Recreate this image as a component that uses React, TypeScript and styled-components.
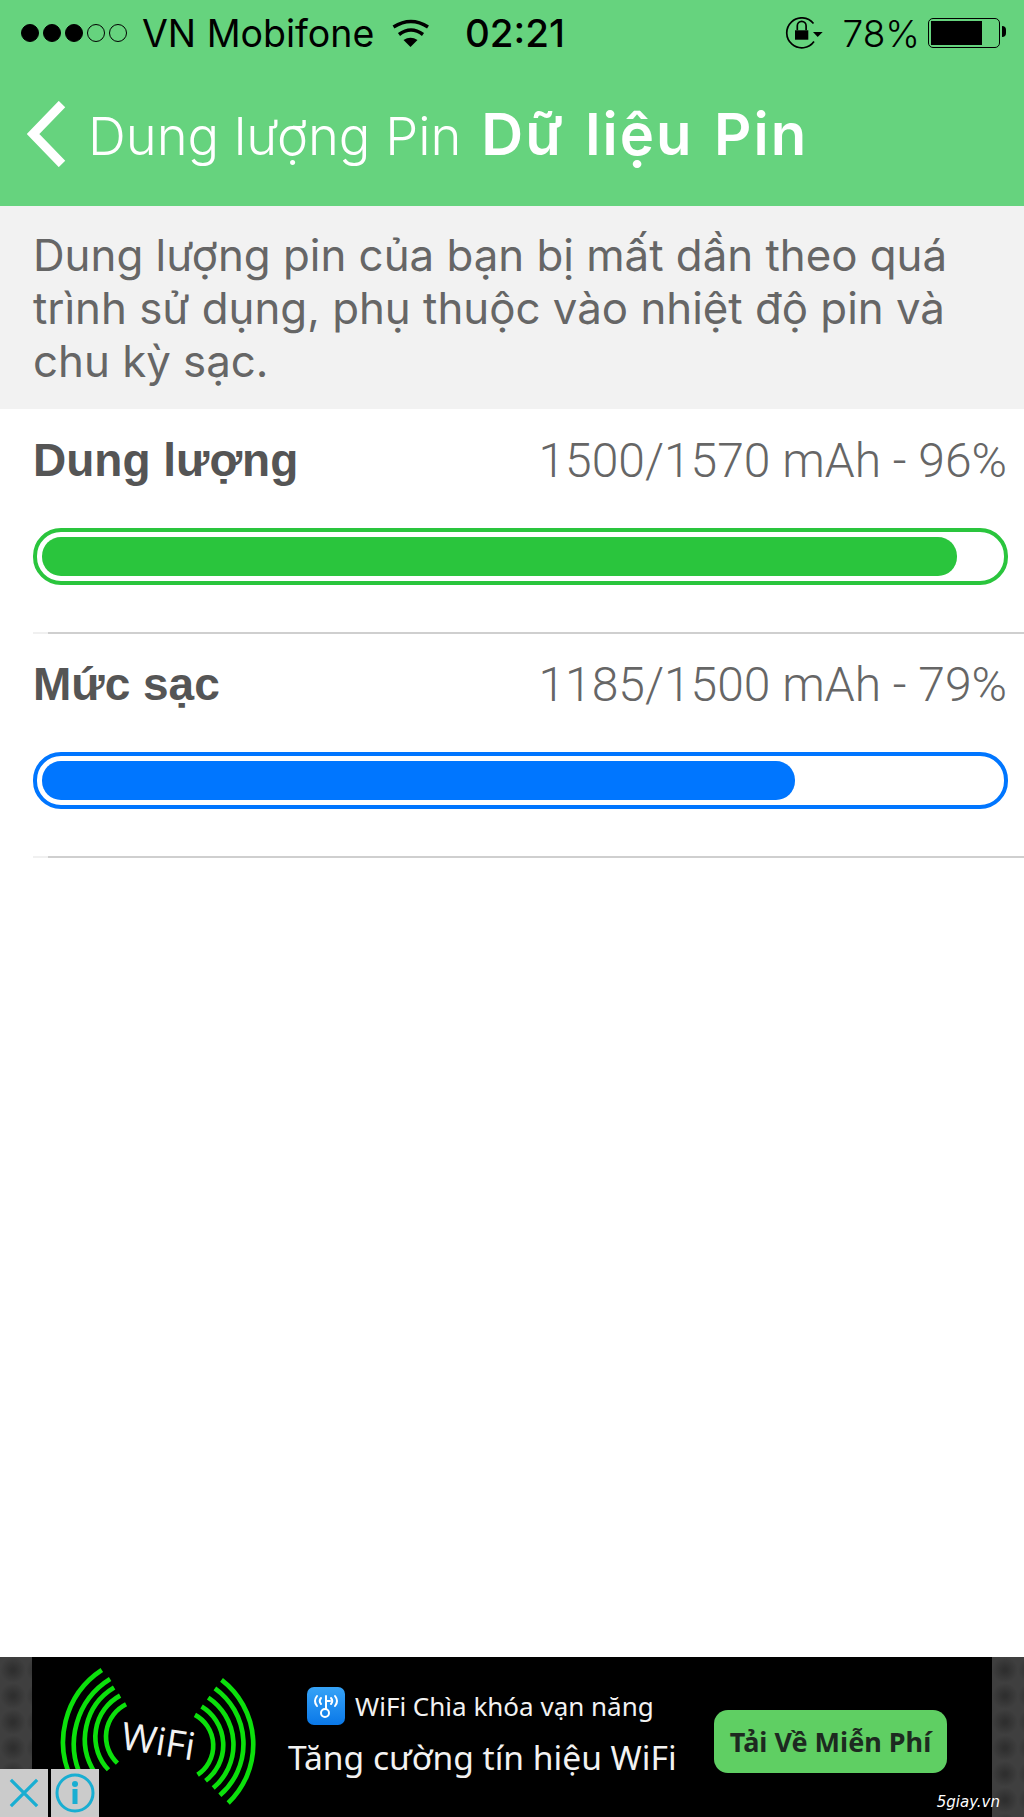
import React from "react";
import styled, { createGlobalStyle } from "styled-components";

const meters = [
  { label: "Dung lượng", value: "1500/1570 mAh - 96%", percent: 96, color: "#2ac53d" },
  { label: "Mức sạc", value: "1185/1500 mAh - 79%", percent: 79, color: "#0076ff" },
];

export default function App() {
  return (
    <Page>
      <GlobalStyle />
      <Header>
        <StatusBar>
          <Signal>
            {[true, true, true, false, false].map((on, i) => (
              <SignalDot key={i} $on={on} />
            ))}
          </Signal>
          <Carrier>VN Mobifone</Carrier>
          <WifiIcon viewBox="0 0 38 28">
            <path d="M1.5 8 Q19 -3 36 8" />
            <path d="M7 15.5 Q19 6.5 31 15.5" />
            <path d="M18.5 28 L11.5 21 Q18.5 16.5 25.5 21 Z" fill="#000" stroke="none" />
          </WifiIcon>
          <Clock>02:21</Clock>
          <StatusRight>
            <LockIcon viewBox="0 0 38 32">
              <path d="M28.5 6.5 A15 15 0 1 0 29 24.5" />
              <rect x="10" y="13.3" width="13.3" height="9.4" fill="#000" stroke="none" />
              <path d="M12.3 13.3 V8.8 a4.4 4.4 0 0 1 8.8 0 V13.3" />
              <path d="M28 15 H37.7 L32.7 20 Z" fill="#000" stroke="none" />
            </LockIcon>
            <Percent>78%</Percent>
            <Battery>
              <BatteryLevel $percent={78} />
              <BatteryCap />
            </Battery>
          </StatusRight>
        </StatusBar>
        <NavBar>
          <BackIcon viewBox="0 0 40 66">
            <path d="M35 3 L6 33 L35 63" />
          </BackIcon>
          <NavTitles>
            <BackLabel>Dung lượng Pin</BackLabel>
            <Title>Dữ liệu Pin</Title>
          </NavTitles>
        </NavBar>
      </Header>

      <Info>
        Dung lượng pin của bạn bị mất dần theo quá trình sử dụng, phụ thuộc vào nhiệt độ pin và chu
        kỳ sạc.
      </Info>

      <Meters>
        {meters.map((m) => (
          <Meter key={m.label}>
            <MeterHead>
              <MeterLabel>{m.label}</MeterLabel>
              <MeterValue>{m.value}</MeterValue>
            </MeterHead>
            <Track $color={m.color}>
              <Fill $color={m.color} $percent={m.percent} />
            </Track>
            <Separator />
          </Meter>
        ))}
      </Meters>

      <Ad>
        <AdSide />
        <AdMain>
          <WifiLogo viewBox="60 30 600 430">
            <g fill="none" stroke="#0ce00c" strokeWidth="14">
              <path d="M185 45 A259 259 0 0 0 100 385" />
              <path d="M210 72 A230 230 0 0 0 125 370" />
              <path d="M222 98 A182 182 0 0 0 165 355" />
              <path d="M240 122 A142 142 0 0 0 205 345" />
              <path d="M258 148 A109 109 0 0 0 232 325" />
              <path d="M545 75 A244 244 0 0 1 565 445" />
              <path d="M525 100 A205 205 0 0 1 540 422" />
              <path d="M505 128 A170 170 0 0 1 520 400" />
              <path d="M485 155 A135 135 0 0 1 497 378" />
              <path d="M465 180 A105 105 0 0 1 473 360" />
            </g>
            <text
              x="238"
              y="282"
              fill="#f2f2f2"
              fontFamily="'Open Sans', sans-serif"
              fontSize="115"
              transform="rotate(9 238 282)"
            >
              WiFi
            </text>
          </WifiLogo>
          <AdCopy>
            <AdBrand>
              <AppIcon viewBox="0 0 38 38">
                <defs>
                  <linearGradient id="appBlue" x1="0" y1="0" x2="0" y2="1">
                    <stop offset="0" stopColor="#36a3f7" />
                    <stop offset="1" stopColor="#0a78e8" />
                  </linearGradient>
                </defs>
                <rect width="38" height="38" rx="7" fill="url(#appBlue)" />
                <g fill="none" stroke="#fff" strokeWidth="2" strokeLinecap="round">
                  <path d="M10 9 Q6 14 10 19" />
                  <path d="M14 11 Q11.5 14 14 17" />
                  <path d="M28 9 Q32 14 28 19" />
                  <path d="M24 11 Q26.5 14 24 17" />
                  <path d="M19 9 V22" />
                  <path d="M19 14 H23" />
                  <circle cx="18" cy="26" r="4" />
                </g>
              </AppIcon>
              <AdBrandText>WiFi Chìa khóa vạn năng</AdBrandText>
            </AdBrand>
            <AdHeadline>Tăng cường tín hiệu WiFi</AdHeadline>
          </AdCopy>
          <AdButton>Tải Về Miễn Phí</AdButton>
        </AdMain>
        <AdSide />
        <AdControls>
          <AdControl>
            <CrossIcon viewBox="0 0 32 32">
              <path d="M2 2 L30 30 M30 2 L2 30" />
            </CrossIcon>
          </AdControl>
          <AdControl>
            <InfoIcon viewBox="0 0 40 40">
              <circle cx="20" cy="20" r="18" fill="none" stroke="#19aed2" strokeWidth="3" />
              <circle cx="20" cy="11" r="3" fill="#19aed2" />
              <rect x="17.5" y="16" width="5" height="15" fill="#19aed2" />
            </InfoIcon>
          </AdControl>
        </AdControls>
        <Watermark>5giay.vn</Watermark>
      </Ad>
    </Page>
  );
}

const GlobalStyle = createGlobalStyle`
  html, body {
    margin: 0;
    padding: 0;
    background: #fff;
  }
`;

const Page = styled.div`
  width: 1024px;
  height: 1817px;
  display: flex;
  flex-direction: column;
  overflow: hidden;
  background: #fff;
  font-family: "Liberation Sans", Arial, sans-serif;
`;

const Header = styled.header`
  height: 206px;
  flex-shrink: 0;
  background: #66d37e;
  display: flex;
  flex-direction: column;
`;

const StatusBar = styled.div`
  height: 66px;
  padding: 0 24px 0 21px;
  display: flex;
  align-items: center;
  color: #000;
  font-family: Inter, "Liberation Sans", sans-serif;
  font-size: 37.5px;
`;

const Signal = styled.div`
  display: flex;
  gap: 4px;
`;

const SignalDot = styled.span<{ $on: boolean }>`
  width: 18px;
  height: 18px;
  box-sizing: border-box;
  border-radius: 50%;
  border: 1.5px solid #000;
  background: ${(p) => (p.$on ? "#000" : "transparent")};
`;

const Carrier = styled.span`
  width: 231px;
  margin-left: 15px;
  white-space: nowrap;
`;

const WifiIcon = styled.svg`
  width: 38px;
  height: 28px;
  margin-left: 19px;
  fill: none;
  stroke: #000;
  stroke-width: 3.5;
`;

const Clock = styled.span`
  margin-left: 35px;
  font-size: 38.5px;
  font-weight: 500;
`;

const StatusRight = styled.div`
  margin-left: auto;
  display: flex;
  align-items: center;
`;

const LockIcon = styled.svg`
  width: 38px;
  height: 32px;
  fill: none;
  stroke: #000;
  stroke-width: 1.7;
`;

const Percent = styled.span`
  margin-left: 20px;
  font-size: 37px;
  font-weight: 300;
`;

const Battery = styled.div`
  position: relative;
  width: 72px;
  height: 30px;
  margin-left: 8px;
  box-sizing: border-box;
  border: 1.5px solid #000;
  border-radius: 5px;
  padding: 2px;
`;

const BatteryLevel = styled.div<{ $percent: number }>`
  width: ${(p) => p.$percent}%;
  height: 100%;
  background: #000;
`;

const BatteryCap = styled.span`
  position: absolute;
  right: -7px;
  top: 7px;
  width: 4px;
  height: 11px;
  background: #000;
  border-radius: 0 4px 4px 0;
`;

const NavBar = styled.nav`
  flex: 1;
  padding: 0 0 4px 27px;
  display: flex;
  align-items: center;
  color: #fff;
`;

const BackIcon = styled.svg`
  width: 40px;
  height: 66px;
  fill: none;
  stroke: #fff;
  stroke-width: 9;
`;

const NavTitles = styled.div`
  margin-left: 21px;
  display: flex;
  align-items: baseline;
`;

const BackLabel = styled.span`
  font-family: Inter, "Liberation Sans", sans-serif;
  font-size: 52.5px;
  font-weight: 300;
`;

const Title = styled.h1`
  margin: 0 0 0 20px;
  font-family: Inter, "Liberation Sans", sans-serif;
  font-size: 58px;
  font-weight: 600;
  letter-spacing: 2px;
  word-spacing: 4px;
`;

const Info = styled.p`
  margin: 0;
  height: 203px;
  flex-shrink: 0;
  box-sizing: border-box;
  padding: 23px 40px 0 33px;
  background: #f2f2f2;
  color: #666;
  font-family: Inter, "Liberation Sans", sans-serif;
  font-size: 43.8px;
  line-height: 53px;
`;

const Meters = styled.section`
  flex: 1;
  padding-left: 33px;
`;

const Meter = styled.div`
  height: 224px;
  box-sizing: border-box;
  padding-top: 26px;
`;

const MeterHead = styled.div`
  height: 50px;
  padding-right: 17px;
  display: flex;
  justify-content: space-between;
  align-items: center;
`;

const MeterLabel = styled.span`
  font-size: 46px;
  font-weight: 700;
  color: #555;
`;

const MeterValue = styled.span`
  font-family: Roboto, "Liberation Sans", sans-serif;
  font-size: 48px;
  font-weight: 300;
  color: #666;
`;

const Track = styled.div<{ $color: string }>`
  margin: 43px 16px 0 0;
  height: 57px;
  box-sizing: border-box;
  border: 4px solid ${(p) => p.$color};
  border-radius: 28px;
  padding: 5px 9px 5px 5px;
`;

const Fill = styled.div<{ $color: string; $percent: number }>`
  width: ${(p) => p.$percent}%;
  height: 100%;
  background: ${(p) => p.$color};
  border-radius: 19px;
`;

const Separator = styled.div`
  margin-top: 47px;
  height: 2px;
  background: linear-gradient(to right, #f0f0f0 15px, #cfcfcf 15px);
`;

const Ad = styled.aside`
  position: relative;
  height: 160px;
  flex-shrink: 0;
  display: flex;
  background: #000;
`;

const AdSide = styled.div`
  width: 32px;
  flex-shrink: 0;
  background-color: #333;
  background-image: radial-gradient(circle, #2f2f2f 10%, #3f3f3f 70%);
  background-size: 26px 26px;
`;

const AdMain = styled.div`
  flex: 1;
  display: flex;
  align-items: flex-start;
  padding-left: 28px;
`;

const WifiLogo = styled.svg`
  width: 200px;
  height: 143px;
  margin-top: 8px;
  flex-shrink: 0;
`;

const AdCopy = styled.div`
  margin: 30px 0 0 28px;
  width: 400px;
  display: flex;
  flex-direction: column;
  color: #f2f2f2;
  font-family: "Noto Sans", "Open Sans", sans-serif;
`;

const AdBrand = styled.div`
  margin-left: 19px;
  display: flex;
  align-items: center;
  gap: 10px;
`;

const AppIcon = styled.svg`
  width: 38px;
  height: 38px;
`;

const AdBrandText = styled.span`
  font-size: 26px;
  white-space: nowrap;
`;

const AdHeadline = styled.div`
  margin-top: 9px;
  font-size: 33.6px;
  white-space: nowrap;
`;

const AdButton = styled.button`
  margin: 53px 0 0 26px;
  width: 233px;
  height: 63px;
  border: none;
  border-radius: 14px;
  background: #5fcf63;
  color: #1d2a20;
  font-family: "Noto Sans", "Open Sans", sans-serif;
  font-size: 27px;
  font-weight: 700;
  white-space: nowrap;
  padding: 0;
`;

const AdControls = styled.div`
  position: absolute;
  left: 0;
  bottom: 0;
  display: flex;
  gap: 3px;
`;

const AdControl = styled.div`
  width: 48px;
  height: 48px;
  background: #cbcbcb;
  display: flex;
  align-items: center;
  justify-content: center;
`;

const CrossIcon = styled.svg`
  width: 30px;
  height: 30px;
  fill: none;
  stroke: #19aed2;
  stroke-width: 3.5;
`;

const InfoIcon = styled.svg`
  width: 40px;
  height: 40px;
`;

const Watermark = styled.span`
  position: absolute;
  right: 24px;
  bottom: 6px;
  color: #fff;
  font-family: "DejaVu Sans", sans-serif;
  font-style: italic;
  font-size: 15px;
`;
